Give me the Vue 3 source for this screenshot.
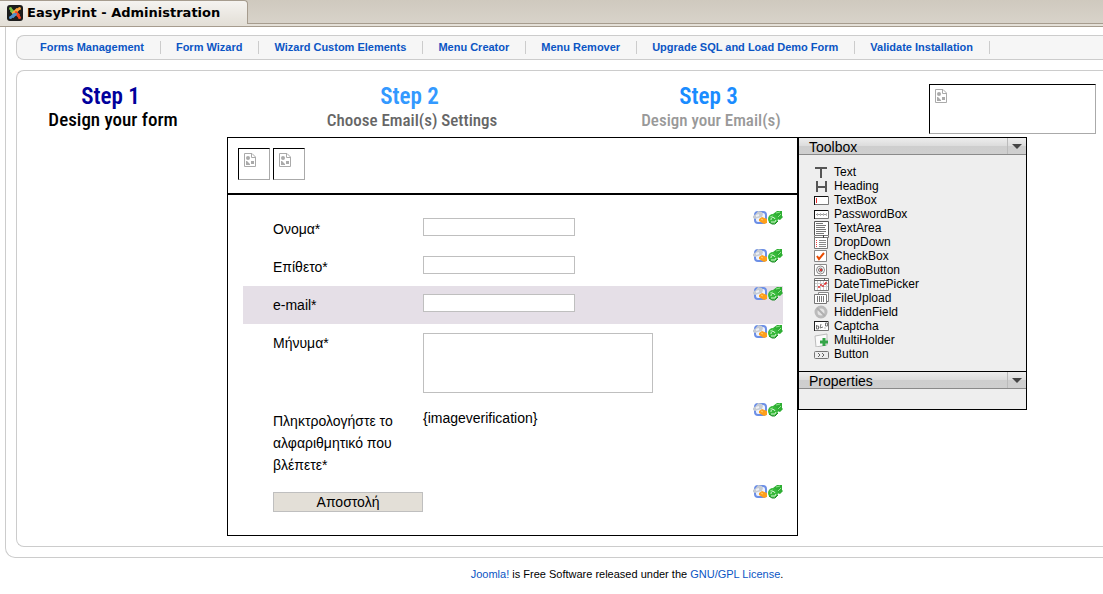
<script setup>
import { ref } from 'vue'

const navItems = [
  'Forms Management',
  'Form Wizard',
  'Wizard Custom Elements',
  'Menu Creator',
  'Menu Remover',
  'Upgrade SQL and Load Demo Form',
  'Validate Installation',
]

const steps = [
  { title: 'Step 1', text: 'Design your form', tone: 'current' },
  { title: 'Step 2', text: 'Choose Email(s) Settings', tone: 'next' },
  { title: 'Step 3', text: 'Design your Email(s)', tone: 'later' },
]

const tools = [
  'Text', 'Heading', 'TextBox', 'PasswordBox', 'TextArea', 'DropDown', 'CheckBox',
  'RadioButton', 'DateTimePicker', 'FileUpload', 'HiddenField', 'Captcha', 'MultiHolder', 'Button',
]

const fields = [
  { id: 'name', label: 'Ονομα*', kind: 'input' },
  { id: 'surname', label: 'Επίθετο*', kind: 'input' },
  { id: 'email', label: 'e-mail*', kind: 'input' },
  { id: 'message', label: 'Μήνυμα*', kind: 'textarea' },
  { id: 'captcha', label: 'Πληκτρολογήστε το αλφαριθμητικό που βλέπετε*', kind: 'text' },
  { id: 'submit', label: 'Αποστολή', kind: 'button' },
]

const selected = ref('email')
</script>

<template>
  <div class="page">
    <svg class="defs" width="0" height="0" aria-hidden="true">
      <defs>
        <symbol id="i-missing" viewBox="0 0 12 14">
          <path d="M.5.5H8L11.500 4v9.500H.5z" fill="#fff" stroke="#aaa" />
          <path d="M7.500.5v4h4" fill="none" stroke="#aaa" />
          <circle cx="4" cy="5" r="2" fill="#aaa" />
          <path d="M2 8h1l3 3v1H2zM7 8h3v3H7z" fill="#aaa" />
        </symbol>
        <symbol id="i-edit" viewBox="0 0 15 15">
          <rect x="2" y="2" width="11" height="11" rx="3" fill="#eef3ff" stroke="#6c8fe6" stroke-width="2" />
          <path d="M0 6l3-2 2-3 4 1 1 2-1 3-4 1-3 1-2-1z" fill="#c6cbd3" />
          <path d="M3 6l3-1" fill="none" stroke="#eef0f4" stroke-width="2" />
          <path d="M6 9l3-2 5 2v4l-3 1-5-3z" fill="#ff9f1a" />
          <path d="M8 9l2 1" stroke="#ffcf6b" />
        </symbol>
        <symbol id="i-move" viewBox="0 0 15 15">
          <path d="M5 4l4-3h5v5l1 1-3 3-6-2z" fill="#2fae34" />
          <circle cx="5" cy="9" r="5" fill="#37b93a" />
          <path d="M8 3l4-1M10 7l3-3M2 7l3-1" fill="none" stroke="#8de58a" />
          <path d="M3 10a2 2 0 0 1 4-1M3 12h4l1-2" fill="none" stroke="#d5f5d2" />
          <path d="M1 12l3 2h3l3-3" fill="none" stroke="#1d8a26" />
        </symbol>
        <symbol id="tool-Text" viewBox="0 0 16 14">
          <path d="M2 2h12v2H9v9H7V4H2z" fill="#555" />
        </symbol>
        <symbol id="tool-Heading" viewBox="0 0 16 14">
          <path d="M3 2h2v5h7V2h2v11h-2V9H5v4H3z" fill="#555" />
        </symbol>
        <symbol id="tool-TextBox" viewBox="0 0 16 14">
          <path d="M1.500 3.500h14v8h-14z" fill="#fff" stroke="#777" />
          <path d="M1 3.500h14M1.500 3v9" stroke="#111" />
          <path d="M3.500 5v5" stroke="#e33" />
        </symbol>
        <symbol id="tool-PasswordBox" viewBox="0 0 16 14">
          <path d="M1.500 3.500h14v8h-14z" fill="#fff" stroke="#777" />
          <path d="M1 3.500h14M1.500 3v9" stroke="#111" />
          <path d="M3 7.500h11" stroke="#999" />
          <path d="M4.500 6v3M7.500 6v3M10.500 6v3M13.500 6v3" stroke="#bbb" />
        </symbol>
        <symbol id="tool-TextArea" viewBox="0 0 16 14">
          <path d="M1.500.5h14v14h-14z" fill="#fff" stroke="#555" />
          <path d="M3 2.500h7M3 4.500h10M3 6.500h9M3 8.500h10M3 10.500h10M3 12.500h8" stroke="#777" />
        </symbol>
        <symbol id="tool-DropDown" viewBox="0 0 16 14">
          <path d="M1.500.5h14v2h-14zM1.500 2.500h13v11h-13z" fill="#fff" stroke="#777" />
          <path d="M10.500 0v3" stroke="#444" />
          <path d="M3 5.500h1M3 7.500h1M3 9.500h1M3 11.500h1" stroke="#e44" />
          <path d="M6 5.500h7M6 7.500h7M6 9.500h7M6 11.500h7" stroke="#888" />
        </symbol>
        <symbol id="tool-CheckBox" viewBox="0 0 16 14">
          <path d="M1.500 1.500h12v11h-12z" fill="#fff" stroke="#888" />
          <path d="M4 7l2 3 5-6" fill="none" stroke="#e84a00" stroke-width="2" />
        </symbol>
        <symbol id="tool-RadioButton" viewBox="0 0 16 14">
          <path d="M1.500 1.500h12v11h-12z" fill="#fff" stroke="#888" />
          <circle cx="7.500" cy="7" r="4" fill="#fff" stroke="#888" />
          <circle cx="7.500" cy="7" r="2" fill="#f3c3c3" stroke="#777" />
          <path d="M7 6h2v2H7z" fill="#d33" />
        </symbol>
        <symbol id="tool-DateTimePicker" viewBox="0 0 16 14">
          <path d="M1.500 1.500h14v12h-14z" fill="#fff" stroke="#777" />
          <path d="M1 3.500h14M11.500 1v3" stroke="#666" />
          <path d="M4.500 4v9M7.500 4v9M10.500 4v9M13.500 4v9M2 6.500h13M2 9.500h13" stroke="#ccc" />
          <path d="M5 10h2M7 8h2M9 9h2M11 7h2M12 6h2" stroke="#d33" stroke-width="1.500" />
        </symbol>
        <symbol id="tool-FileUpload" viewBox="0 0 16 14">
          <path d="M5.500 1.500h10v9h-10z" fill="#fff" stroke="#888" />
          <path d="M1.500 3.500h12v9h-12z" fill="#fff" stroke="#777" />
          <path d="M4.500 5v6M6.500 5v6M8.500 5v6M10.500 5v6" stroke="#777" />
        </symbol>
        <symbol id="tool-HiddenField" viewBox="0 0 16 14">
          <circle cx="8" cy="7" r="5" fill="#e4e4e4" stroke="#bbb" stroke-width="3" />
          <path d="M4 3l8 8" stroke="#b0b0b0" stroke-width="2" />
        </symbol>
        <symbol id="tool-Captcha" viewBox="0 0 16 14">
          <path d="M1.500 2.500h14v9h-14z" fill="#fff" stroke="#777" />
          <path d="M1 2.500h14M1.500 2v10" stroke="#222" />
          <path d="M3.500 6v4h2V7h-2M8 5l-1 4 3-1M11.500 9h1M12.500 4v3h2V4z" fill="none" stroke="#777" />
        </symbol>
        <symbol id="tool-MultiHolder" viewBox="0 0 16 14">
          <path d="M2 3l12-2v11l-11 2z" fill="#fafafa" stroke="#bbb" />
          <path d="M7 9h8M11 5v8" stroke="#35a548" stroke-width="3" />
        </symbol>
        <symbol id="tool-Button" viewBox="0 0 16 14">
          <rect x="1.500" y="4.500" width="14" height="7" rx="1" fill="#eee" stroke="#777" />
          <path d="M5 6l2 2-2 2M9 6l2 2-2 2" fill="none" stroke="#666" />
        </symbol>
      </defs>
    </svg>

    <header class="tabbar">
      <div class="tab">
        <svg class="joomla" viewBox="0 0 16 16" aria-hidden="true">
          <rect width="16" height="16" rx="3" fill="#1c1c1c" />
          <g fill="none" stroke-width="2" stroke-linecap="round">
            <path d="M4 4l3 3M4 6l4 4" stroke="#7ac143" />
            <path d="M12 4L9 7M10 4L6 8" stroke="#f9a541" />
            <path d="M12 12L9 9M12 10L9 7" stroke="#f44321" />
            <path d="M4 12l3-3M6 12l3-3" stroke="#5091cd" />
          </g>
          <circle cx="3.500" cy="3.500" r="1.500" fill="#7ac143" />
          <circle cx="12.500" cy="3.500" r="1.500" fill="#f9a541" />
          <circle cx="12.500" cy="12.500" r="1.500" fill="#f44321" />
          <circle cx="3.500" cy="12.500" r="1.500" fill="#5091cd" />
        </svg>
        <span>EasyPrint - Administration</span>
      </div>
    </header>

    <main class="frame">
      <nav class="menu">
        <a v-for="item in navItems" :key="item" href="#">{{ item }}</a>
      </nav>

      <section class="content">
        <div class="steps">
          <div v-for="step in steps" :key="step.title" class="step" :class="step.tone">
            <strong>{{ step.title }}</strong>
            <span>{{ step.text }}</span>
          </div>
          <div class="missing banner">
            <svg><use href="#i-missing" /></svg>
          </div>
        </div>

        <div class="workspace">
          <form class="designer" @submit.prevent>
            <div class="designer-bar">
              <button type="button" class="missing" aria-label="Save">
                <svg><use href="#i-missing" /></svg>
              </button>
              <button type="button" class="missing" aria-label="Preview">
                <svg><use href="#i-missing" /></svg>
              </button>
            </div>
            <div class="designer-body">
              <div
                v-for="field in fields"
                :key="field.id"
                class="row"
                :class="{ selected: selected === field.id }"
                @click="selected = field.id"
              >
                <button v-if="field.kind === 'button'" type="submit" class="submit">{{ field.label }}</button>
                <template v-else>
                  <label v-if="field.kind !== 'text'" class="label" :for="field.id">{{ field.label }}</label>
                  <span v-else class="label">{{ field.label }}</span>
                  <input v-if="field.kind === 'input'" :id="field.id" type="text" class="box" />
                  <textarea v-else-if="field.kind === 'textarea'" :id="field.id" class="box area"></textarea>
                  <span v-else class="value">{imageverification}</span>
                </template>
                <span class="actions">
                  <button type="button" aria-label="Edit"><svg><use href="#i-edit" /></svg></button>
                  <button type="button" aria-label="Move"><svg><use href="#i-move" /></svg></button>
                </span>
              </div>
            </div>
          </form>

          <aside class="side">
            <button type="button" class="side-head">
              <span>Toolbox</span>
              <i class="arrow"></i>
            </button>
            <ul class="tools">
              <li v-for="tool in tools" :key="tool">
                <button type="button">
                  <svg><use :href="'#tool-' + tool" /></svg>
                  <span>{{ tool }}</span>
                </button>
              </li>
            </ul>
            <button type="button" class="side-head second">
              <span>Properties</span>
              <i class="arrow"></i>
            </button>
            <div class="properties"></div>
          </aside>
        </div>
      </section>
    </main>

    <footer class="footer">
      <a href="#">Joomla!</a> is Free Software released under the <a href="#">GNU/GPL License</a>.
    </footer>
  </div>
</template>

<style>
body {
  margin: 0;
  background: #fff;
}
</style>

<style scoped>
.page {
  overflow: hidden;
  font-family: "Liberation Sans", Arial, sans-serif;
  font-size: 11px;
  color: #000;
}
.page * {
  box-sizing: border-box;
}
.defs {
  position: absolute;
}
button {
  padding: 0;
  border: 0;
  background: none;
  color: inherit;
  font: inherit;
  cursor: pointer;
}
a {
  color: #0b55c4;
  text-decoration: none;
}

.tabbar {
  height: 27px;
  border-bottom: 1px solid #a69c8e;
  background: linear-gradient(#cfc9be 0, #d8d3ca 23px, #a69c8e 23px, #a69c8e 24px, #e4e0d8 24px);
}
.tab {
  display: flex;
  align-items: center;
  gap: 4px;
  width: 248px;
  height: 24px;
  padding-left: 7px;
  border: solid #a69c8e;
  border-width: 1px 1px 0 0;
  border-top-right-radius: 4px;
  background: linear-gradient(#f5f3f0, #e4e0d8);
  font: bold 13px "DejaVu Sans", sans-serif;
  white-space: nowrap;
}
.joomla {
  width: 16px;
  height: 16px;
}

.frame {
  margin-left: 5px;
  padding: 8px 0 10px 10px;
  border: solid #ccc;
  border-width: 0 0 1px 1px;
  border-bottom-left-radius: 10px;
}
.menu {
  display: flex;
  align-items: center;
  height: 25px;
  padding-left: 8px;
  border: 1px solid #ccc;
  border-right: 0;
  border-radius: 8px 0 0 8px;
  background: #f6f6f6;
}
.menu a {
  padding: 0 16px 0 15px;
  border-right: 1px solid #ccc;
  font-weight: bold;
  line-height: 13px;
  white-space: nowrap;
}

.content {
  margin-top: 10px;
  padding-bottom: 10px;
  border: 1px solid #ccc;
  border-right: 0;
  border-radius: 8px 0 0 8px;
}
.steps {
  display: flex;
  gap: 107px;
  height: 66px;
  padding: 13px 7px 0 0;
}
.step {
  display: flex;
  flex-direction: column;
  align-items: center;
  flex: 0 0 192px;
  font-family: "Roboto Condensed", "Liberation Sans Narrow", "Liberation Sans", sans-serif;
  white-space: nowrap;
}
.step:nth-child(3) {
  margin-right: -107px;
}
.step strong {
  padding-right: 5px;
  font-size: 23px;
  font-weight: 600;
  line-height: 26px;
}
.step span {
  font-size: 17px;
  font-weight: 500;
  line-height: 20px;
}
.current strong { color: #00009c; }
.step.current span { font-size: 19px; }
.next strong { color: #3399ff; }
.next span { color: #666; }
.later strong { color: #1a8cff; }
.later span { color: #999; }

.missing {
  display: flex;
  align-items: flex-start;
  justify-content: flex-start;
  width: 32px;
  height: 32px;
  padding: 4px 0 0 5px;
  border: 1px solid;
  border-color: #000 #aaa #aaa #000;
}
.missing svg {
  flex: none;
  width: 12px;
  height: 14px;
}
.banner {
  flex: none;
  width: 167px;
  height: 50px;
  margin-left: auto;
}

.workspace {
  display: flex;
  align-items: flex-start;
  padding-left: 210px;
}
.designer {
  flex: 0 0 571px;
  border: 1px solid #000;
}
.designer-bar {
  display: flex;
  align-items: flex-start;
  gap: 3px;
  height: 57px;
  padding: 10px;
  border-bottom: 2px solid #000;
}
.designer-body {
  padding: 15px 14px 15px 15px;
  font-size: 14px;
}
.row {
  display: flex;
  align-items: flex-start;
  min-height: 36px;
  padding: 8px 0 8px 30px;
}
.row.selected {
  background: #e5dfe7;
}
.label {
  width: 150px;
  padding-right: 20px;
  line-height: 22px;
}
.box {
  width: 152px;
  height: 18px;
  margin: 0;
  padding: 0 2px;
  border: 1px solid #bfbfbf;
  background: #fff;
  font: inherit;
}
.area {
  width: 230px;
  height: 60px;
  margin: 1px 0;
  resize: none;
}
.value {
  line-height: 16px;
}
.submit {
  width: 150px;
  height: 20px;
  border: 1px solid #bfbfbf;
  background: #e3dfd7;
  line-height: 18px;
}
.actions {
  display: flex;
  margin-left: auto;
  margin-top: -8px;
}
.actions svg {
  display: block;
  width: 15px;
  height: 15px;
}

.side {
  flex: 0 0 229px;
  border: 1px solid #000;
  background: #eee;
}
.side-head {
  display: flex;
  width: 100%;
  height: 17px;
  padding-left: 10px;
  border-bottom: 1px solid #8a8a8a;
  background: linear-gradient(#ededed, #dcdcdc 50%, #cecece 50%, #cfcfcf);
  font-size: 14px;
  line-height: 18px;
}
.second {
  height: 18px;
  border-top: 1px solid #000;
}
.arrow {
  display: flex;
  align-items: center;
  justify-content: center;
  width: 19px;
  height: 16px;
  margin-left: auto;
  border-left: 1px solid #bbb;
}
.arrow::before {
  content: "";
  border: solid transparent;
  border-width: 5px 5px 0;
  border-top-color: #444;
}
.tools {
  margin: 0;
  padding: 10px 14px;
  list-style: none;
  font-size: 12px;
  line-height: 14px;
}
.tools button {
  display: flex;
  gap: 5px;
  width: 100%;
  height: 14px;
}
.tools svg {
  flex: none;
  width: 16px;
  height: 14px;
}
.properties {
  height: 20px;
}

.footer {
  margin: 9px 0 0 151px;
  line-height: 14px;
  text-align: center;
}
</style>
